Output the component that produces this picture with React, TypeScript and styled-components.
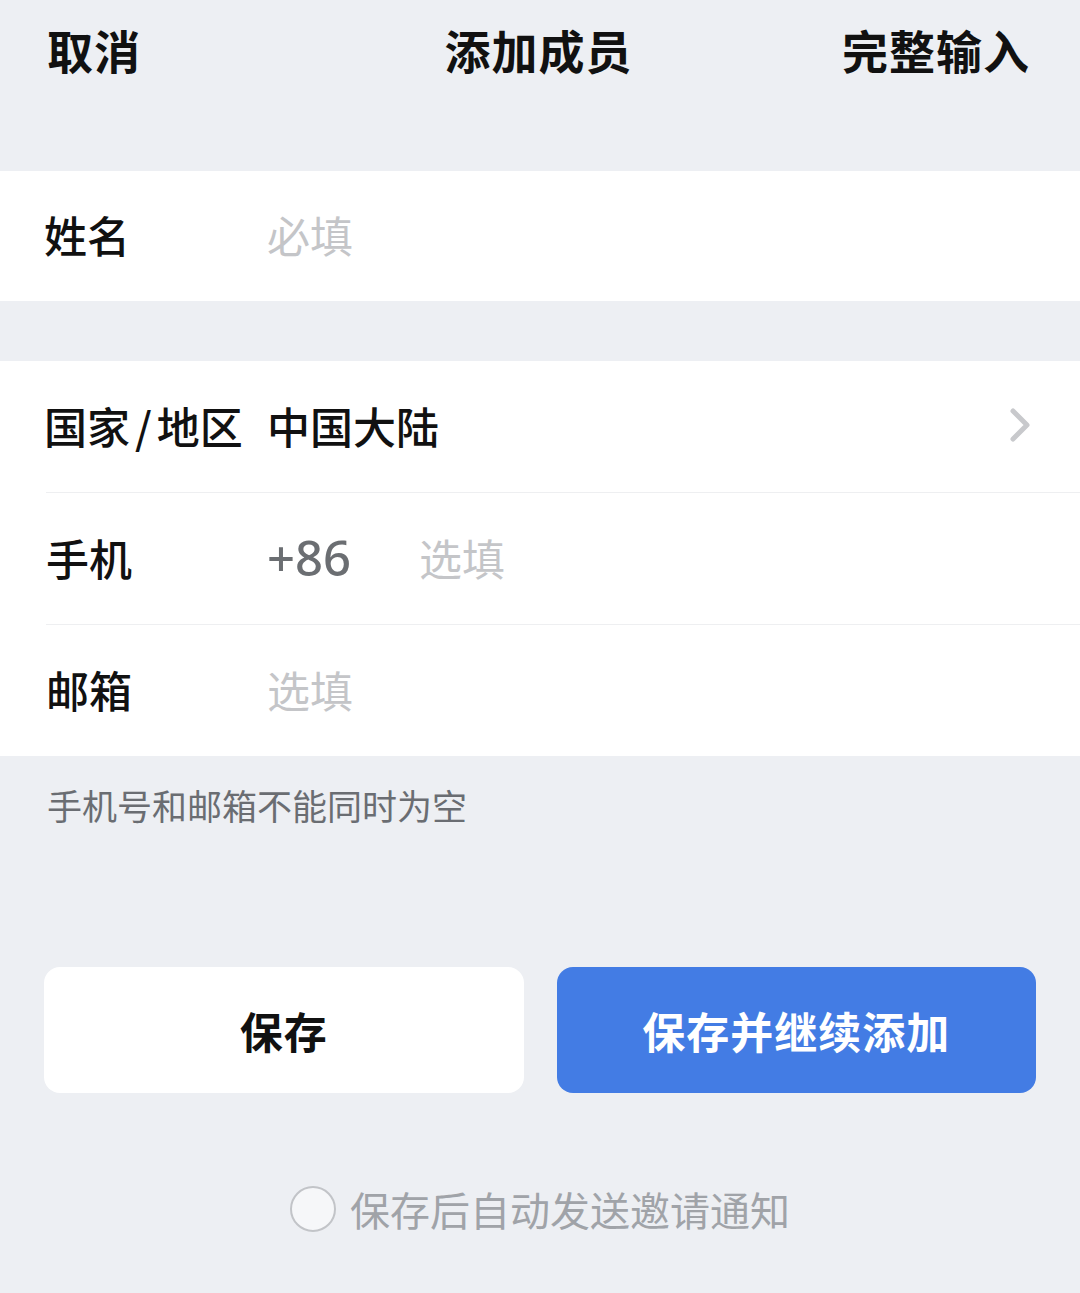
import styled, { createGlobalStyle } from "styled-components";

const GlobalStyle = createGlobalStyle`
  html, body {
    margin: 0;
    padding: 0;
    background: #edeff3;
    font-family: "Noto Sans CJK SC", "Noto Sans", sans-serif;
  }
`;

const Page = styled.div`
  width: 1080px;
  height: 1293px;
  background: #edeff3;
  overflow: hidden;
`;

const Header = styled.header`
  display: grid;
  grid-template-columns: 1fr auto 1fr;
  align-items: center;
  height: 98px;
  padding: 0 50px 0 47px;
  margin-bottom: 73px;
`;

const HeaderText = styled.div<{ $align: "left" | "center" | "right" }>`
  font-size: 46px;
  font-weight: 700;
  color: #111;
  text-align: ${(p) => p.$align};
  letter-spacing: 1px;
`;

const Section = styled.section<{ $gap?: number }>`
  background: #fff;
  margin-bottom: ${(p) => p.$gap ?? 0}px;
`;

const Row = styled.div<{ $divider?: boolean }>`
  display: flex;
  align-items: center;
  height: ${(p) => (p.$divider ? 132 : 131)}px;
  padding: 0 44px 4px;
  box-sizing: border-box;
  border-top: ${(p) => (p.$divider ? "1px solid #eeeff1" : "none")};
  margin-left: ${(p) => (p.$divider ? 46 : 0)}px;
  padding-left: ${(p) => (p.$divider ? 0 : 44)}px;
`;

const Label = styled.div<{ $inset?: boolean }>`
  width: ${(p) => (p.$inset ? 221 : 223)}px;
  flex-shrink: 0;
  font-size: 43px;
  font-weight: 500;
  color: #111;
  white-space: nowrap;
`;

const Slash = styled.span`
  margin: 0 5px;
`;

const Value = styled.div<{ $tone: "dark" | "placeholder" | "code" }>`
  font-size: ${(p) => (p.$tone === "code" ? 49 : 43)}px;
  font-weight: ${(p) => (p.$tone === "placeholder" ? 400 : 500)};
  font-family: ${(p) =>
    p.$tone === "code" ? `"Noto Sans", "Noto Sans CJK SC", sans-serif` : "inherit"};
  color: ${(p) =>
    p.$tone === "dark" ? "#111" : p.$tone === "code" ? "#6b6e72" : "#c4c5c8"};
  margin-right: ${(p) => (p.$tone === "code" ? 68 : 0)}px;
`;

const Chevron = styled.svg`
  margin-left: auto;
  width: 24px;
  height: 36px;
  margin-right: 4px;
`;

const Hint = styled.p`
  margin: 0;
  padding: 27px 0 0 47px;
  height: 211px;
  box-sizing: border-box;
  font-size: 35px;
  color: #6a6d72;
  line-height: 44px;
`;

const ButtonRow = styled.div`
  display: grid;
  grid-template-columns: 1fr 1fr;
  gap: 33px;
  padding: 0 44px;
  margin-bottom: 87px;
`;

const Button = styled.button<{ $primary?: boolean }>`
  height: 126px;
  border: none;
  border-radius: 16px;
  background: ${(p) => (p.$primary ? "#437ce4" : "#fff")};
  color: ${(p) => (p.$primary ? "#fff" : "#111")};
  font-family: inherit;
  font-size: 43px;
  font-weight: 700;
  letter-spacing: 1px;
`;

const Invite = styled.label`
  display: flex;
  align-items: center;
  justify-content: center;
  gap: 14px;
  font-size: 40px;
  color: #a0a3a8;
`;

const Radio = styled.span`
  width: 42px;
  height: 42px;
  border-radius: 50%;
  border: 2px solid #c2c4c8;
  background: #f6f7f9;
`;

export default function App() {
  return (
    <Page>
      <GlobalStyle />
      <Header>
        <HeaderText $align="left">取消</HeaderText>
        <HeaderText $align="center">添加成员</HeaderText>
        <HeaderText $align="right">完整输入</HeaderText>
      </Header>

      <Section $gap={60}>
        <Row style={{ height: 130 }}>
          <Label>姓名</Label>
          <Value $tone="placeholder">必填</Value>
        </Row>
      </Section>

      <Section>
        <Row>
          <Label>
            国家<Slash>/</Slash>地区
          </Label>
          <Value $tone="dark">中国大陆</Value>
          <Chevron viewBox="0 0 24 36">
            <path
              d="M5 4 L19 18 L5 32"
              fill="none"
              stroke="#c8c9cc"
              strokeWidth="5"
              strokeLinecap="round"
              strokeLinejoin="round"
            />
          </Chevron>
        </Row>
        <Row $divider>
          <Label $inset>手机</Label>
          <Value $tone="code">+86</Value>
          <Value $tone="placeholder">选填</Value>
        </Row>
        <Row $divider>
          <Label $inset>邮箱</Label>
          <Value $tone="placeholder">选填</Value>
        </Row>
      </Section>

      <Hint>手机号和邮箱不能同时为空</Hint>

      <ButtonRow>
        <Button>保存</Button>
        <Button $primary>保存并继续添加</Button>
      </ButtonRow>

      <Invite>
        <Radio />
        保存后自动发送邀请通知
      </Invite>
    </Page>
  );
}
